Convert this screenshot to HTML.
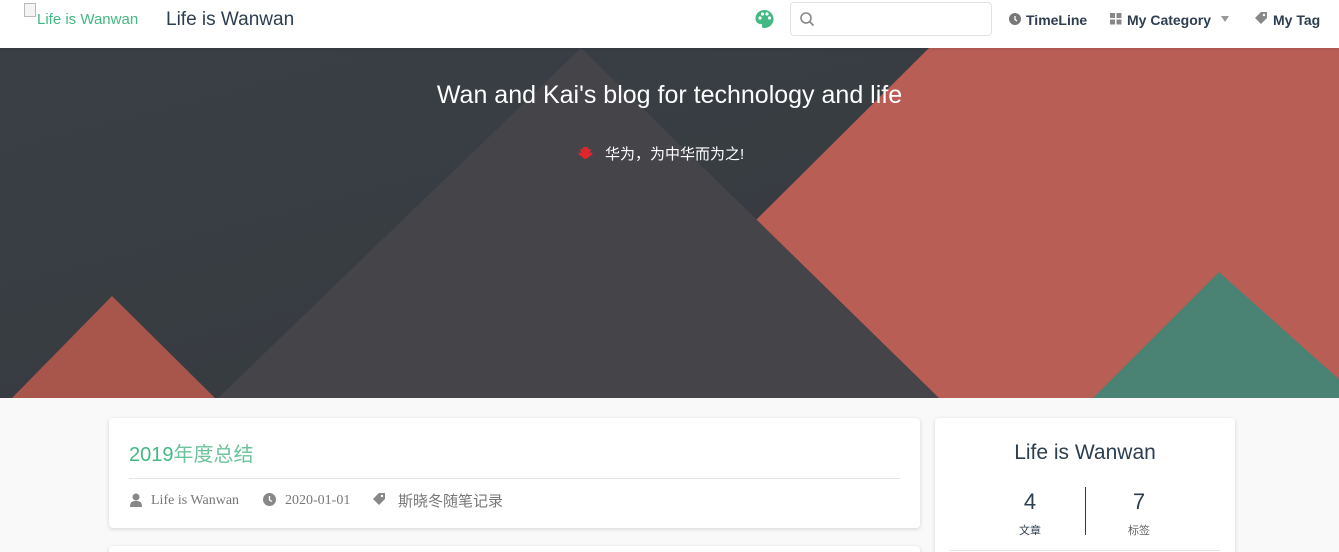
<!DOCTYPE html>
<html><head><meta charset="utf-8"><style>
*{box-sizing:border-box;margin:0;padding:0}
html,body{width:1339px;height:552px;overflow:hidden}
body{background:#f9f9f9;font-family:"Liberation Sans","Noto Sans CJK SC",sans-serif;position:relative}
.nav{position:absolute;left:0;top:0;width:1339px;height:48px;background:#fff;box-shadow:0 1px 3px rgba(0,0,0,.1);z-index:3}
.abs{position:absolute;white-space:nowrap}
.banner{position:absolute;left:0;top:48px;width:1339px;height:350px}
.card{position:absolute;background:#fff;border-radius:4px;box-shadow:0 1px 4px rgba(0,0,0,.15)}
.meta{color:#777;font-family:"Liberation Serif","Noto Sans CJK SC",serif;font-size:14px}
</style></head><body>
<div class="nav">
 <div class="abs" style="left:24px;top:3px;width:12px;height:14px;border:1px solid #bbb;background:#f4f4f4"></div>
 <div class="abs" style="left:37px;top:11px;font-size:15px;color:#42b983">Life is Wanwan</div>
 <div class="abs" style="left:166px;top:9px;font-size:19px;color:#2c3e50">Life is Wanwan</div>
 <svg class="abs" style="left:754px;top:9px" width="21" height="20" viewBox="0 0 20 20"><path d="M10 1C4.5 1 1 5 1 9.5 1 13 3.5 15 6 15c1.5 0 2 1 1.5 2.3C7 18.5 8 19 10 19c5 0 9-4 9-9S15 1 10 1z" fill="#42b983"/><circle cx="5.5" cy="9" r="1.6" fill="#fff"/><circle cx="8" cy="5" r="1.6" fill="#fff"/><circle cx="12.5" cy="5" r="1.6" fill="#fff"/><circle cx="15" cy="9" r="1.6" fill="#fff"/></svg>
 <div class="abs" style="left:790px;top:2px;width:202px;height:34px;border:1px solid #e3e3e3;border-radius:4px"></div>
 <svg class="abs" style="left:799px;top:11px" width="16" height="16"><circle cx="7" cy="7" r="5" stroke="#888" stroke-width="1.6" fill="none"/><path d="M10.5 10.5l4 4" stroke="#888" stroke-width="1.8"/></svg>
 <svg class="abs" style="left:1009px;top:13px" width="12" height="12"><circle cx="6" cy="6" r="6" fill="#777"/><path d="M6 3v3.5l2 1.5" stroke="#fff" stroke-width="1.3" fill="none"/></svg>
 <div class="abs" style="left:1026px;top:12px;font-size:14px;font-weight:bold;color:#2c3e50">TimeLine</div>
 <svg class="abs" style="left:1110px;top:13px" width="12" height="12"><rect x="0" y="0" width="5" height="5" fill="#888"/><rect x="6.5" y="0" width="5" height="5" fill="#888"/><rect x="0" y="6.5" width="5" height="5" fill="#888"/><rect x="6.5" y="6.5" width="5" height="5" fill="#888"/></svg>
 <div class="abs" style="left:1127px;top:12px;font-size:14px;font-weight:bold;color:#2c3e50">My Category</div>
 <div class="abs" style="left:1221px;top:16px;width:0;height:0;border-left:4px solid transparent;border-right:4px solid transparent;border-top:6px solid #999"></div>
 <svg class="abs" style="left:1255px;top:12px" width="13" height="13"><path d="M6 0h6v6l-6 6-6-6z" fill="#888"/><circle cx="9" cy="3" r="1.2" fill="#fff"/></svg>
 <div class="abs" style="left:1273px;top:12px;font-size:14px;font-weight:bold;color:#2c3e50">My Tag</div>
</div>
<svg class="banner" width="1339" height="350" viewBox="0 48 1339 350">
 <defs><linearGradient id="bg" x1="0" y1="0" x2="1" y2="1"><stop offset="0" stop-color="#3a3f46"/><stop offset="1" stop-color="#353a3d"/></linearGradient></defs>
 <rect x="0" y="48" width="1339" height="350" fill="url(#bg)"/>
 <polygon points="929,48 1339,48 1339,398 577,398" fill="#b95e55"/>
 <polygon points="1219,272 1093,398 1360,398" fill="#4a8274"/>
 <polygon points="112,296 12,398 215,398" fill="#a8554b"/>
 <polygon points="581,48 218,398 939,398" fill="#454449"/>
</svg>
<div class="abs" style="left:0;width:1339px;top:81px;text-align:center;font-size:25px;color:#fff;z-index:2">Wan and Kai's blog for technology and life</div>
<svg class="abs" style="left:578px;top:146px;z-index:2" width="15" height="13" viewBox="0 0 15 13"><path d="M7.5 12L3 3l4.5 9zM7.5 12L6 1 7.5 12zM7.5 12L9 1zM7.5 12L12 3zM7.5 12L1 7zM7.5 12L14 7z" stroke="#e0262d" stroke-width="2.5" fill="#e0262d"/></svg>
<div class="abs" style="left:605px;top:143px;font-size:15px;color:#fff;z-index:2">华为，为中华而为之!</div>
<div class="card" style="left:109px;top:418px;width:811px;height:110px">
 <div class="abs" style="left:20px;top:20px;font-size:20px;color:#42b983">2019<span style="color:#6cc49b">年度总结</span></div>
 <div class="abs" style="left:20px;top:60px;width:771px;height:1px;background:#e5e5e5"></div>
 <svg class="abs" style="left:21px;top:75px" width="12" height="14"><circle cx="6" cy="4" r="3.5" fill="#888"/><path d="M0 14c0-5 2-6 6-6s6 1 6 6z" fill="#888"/></svg>
 <div class="abs meta" style="left:42px;top:75px">Life is Wanwan</div>
 <svg class="abs" style="left:154px;top:75px" width="13" height="13"><circle cx="6.5" cy="6.5" r="6.5" fill="#888"/><path d="M6.5 3v4l2.5 1.5" stroke="#fff" stroke-width="1.3" fill="none"/></svg>
 <div class="abs meta" style="left:176px;top:75px">2020-01-01</div>
 <svg class="abs" style="left:264px;top:75px" width="13" height="13"><path d="M6 0h6v6l-6 6-6-6z" fill="#888"/><circle cx="9" cy="3" r="1.2" fill="#fff"/></svg>
 <div class="abs meta" style="left:289px;top:72px;font-size:15px;font-family:'Noto Sans CJK SC',sans-serif">斯晓冬随笔记录</div>
</div>
<div class="card" style="left:109px;top:546px;width:811px;height:20px"></div>
<div class="card" style="left:935px;top:418px;width:300px;height:150px">
 <div class="abs" style="left:0;width:300px;top:23px;text-align:center;font-size:21px;color:#2c3e50">Life is Wanwan</div>
 <div class="abs" style="left:45px;width:100px;top:71px;text-align:center;font-size:22px;color:#2c3e50">4</div>
 <div class="abs" style="left:45px;width:100px;top:104px;text-align:center;font-size:11px;color:#2c3e50">文章</div>
 <div class="abs" style="left:150px;top:69px;width:1px;height:48px;background:#2c3e50"></div>
 <div class="abs" style="left:154px;width:100px;top:71px;text-align:center;font-size:22px;color:#2c3e50">7</div>
 <div class="abs" style="left:154px;width:100px;top:104px;text-align:center;font-size:11px;color:#666">标签</div>
 <div class="abs" style="left:15px;top:132px;width:270px;height:1px;background:#e5e5e5"></div>
</div>
</body></html>
